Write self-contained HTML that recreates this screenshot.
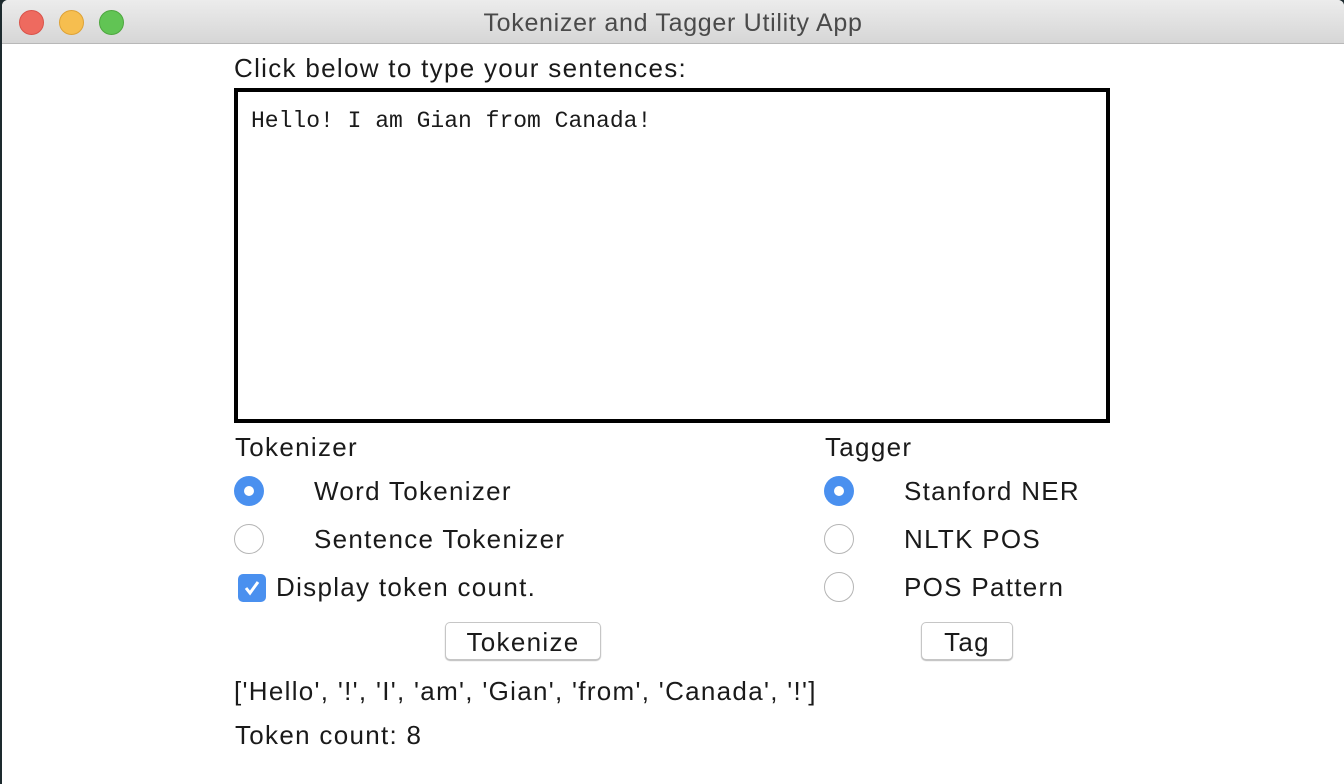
<!DOCTYPE html>
<html><head><style>
body{margin:0;width:1344px;height:784px;overflow:hidden;background:#1d2a2e;font-family:"Liberation Sans",sans-serif;color:#1a1a1a}
.win{position:absolute;left:2px;top:0;width:1342px;height:784px;background:#fff;border-radius:6px 6px 0 0;overflow:hidden}
.tb{height:43px;background:linear-gradient(#ececec,#d6d6d6);border-bottom:1px solid #b8b8b8;text-align:center;font-size:25px;letter-spacing:0.7px;line-height:46px;color:#4a4a4a}
.dot{position:absolute;top:10px;width:23px;height:23px;border-radius:50%}
.t{position:absolute;font-size:26px;letter-spacing:1.3px;white-space:nowrap}
.ta{position:absolute;left:234px;top:88px;width:868px;height:327px;border:4px solid #000}
.mono{position:absolute;left:251px;top:108px;font-family:"Liberation Mono",monospace;font-size:23px}
.r{position:absolute;width:30px;height:30px;border-radius:50%;box-sizing:border-box}
.on{background:#4a90ef}
.on::after{content:"";position:absolute;left:10px;top:10px;width:10px;height:10px;border-radius:50%;background:#fff}
.off{border:1px solid #b5b5b5;background:#fff}
.btn{position:absolute;height:38px;border:1px solid #c6c6c6;border-radius:5px;background:#fff;box-shadow:0 1px 1px #bbb;font-size:26px;letter-spacing:1.3px;text-align:center;line-height:38px;box-sizing:border-box}
</style></head><body>
<div class="win">
<div class="tb">Tokenizer and Tagger Utility App</div>
<div class="dot" style="left:17px;background:#ee6a5f;border:1px solid #d9534a"></div>
<div class="dot" style="left:57px;background:#f6be4f;border:1px solid #dea236"></div>
<div class="dot" style="left:97px;background:#61c454;border:1px solid #4ea73f"></div>
</div>
<div class="t" style="left:234px;top:53px">Click below to type your sentences:</div>
<div class="ta"></div>
<div class="mono">Hello! I am Gian from Canada!</div>
<div class="t" style="left:235px;top:432px">Tokenizer</div>
<div class="t" style="left:825px;top:432px">Tagger</div>
<div class="r on" style="left:234px;top:476px"></div>
<div class="t" style="left:314px;top:476px">Word Tokenizer</div>
<div class="r off" style="left:234px;top:524px"></div>
<div class="t" style="left:314px;top:524px">Sentence Tokenizer</div>
<div style="position:absolute;left:238px;top:574px;width:28px;height:28px;background:#4a90ef;border-radius:5px"><svg width="28" height="28"><path d="M8 14l4 5 8-11" stroke="#fff" stroke-width="3" fill="none"/></svg></div>
<div class="t" style="left:276px;top:572px">Display token count.</div>
<div class="r on" style="left:824px;top:476px"></div>
<div class="t" style="left:904px;top:476px">Stanford NER</div>
<div class="r off" style="left:824px;top:524px"></div>
<div class="t" style="left:904px;top:524px">NLTK POS</div>
<div class="r off" style="left:824px;top:572px"></div>
<div class="t" style="left:904px;top:572px">POS Pattern</div>
<div class="btn" style="left:445px;top:622px;width:156px">Tokenize</div>
<div class="btn" style="left:921px;top:622px;width:92px">Tag</div>
<div class="t" style="left:234px;top:676px">['Hello', '!', 'I', 'am', 'Gian', 'from', 'Canada', '!']</div>
<div class="t" style="left:235px;top:720px">Token count: 8</div>
</body></html>
